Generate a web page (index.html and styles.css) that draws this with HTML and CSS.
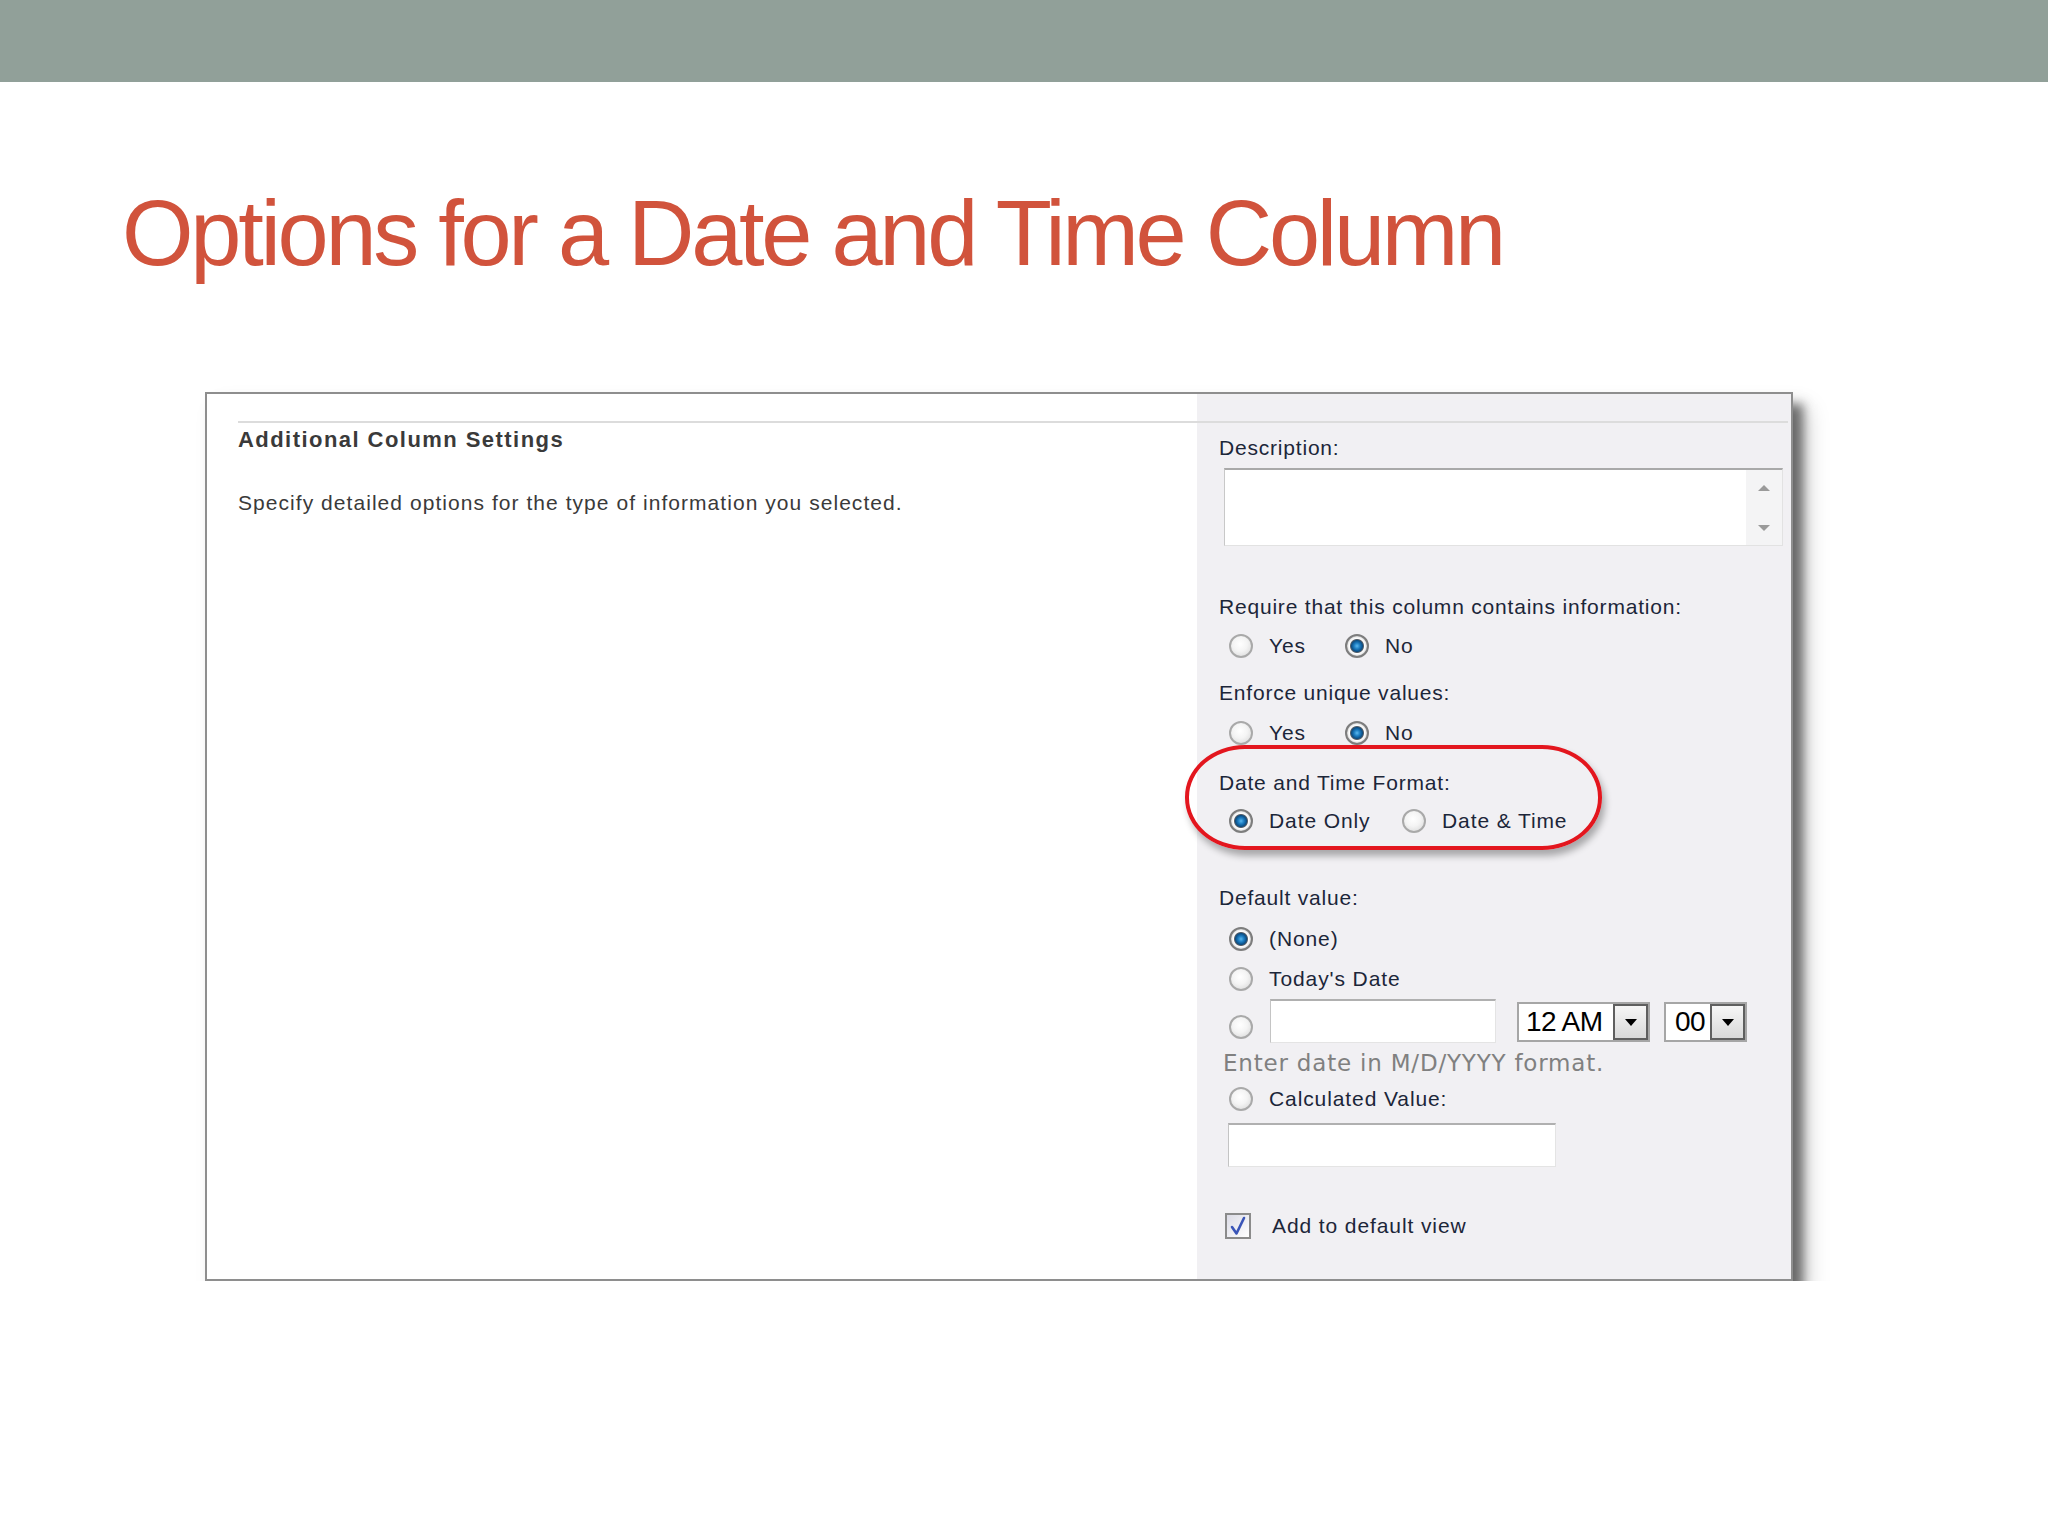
FILE: index.html
```html
<!DOCTYPE html>
<html lang="en">
<head>
<meta charset="utf-8">
<title>Options for a Date and Time Column</title>
<link rel="stylesheet" href="styles.css">
</head>
<body>
<div class="topbar"></div>
<h1 class="title">Options for a Date and Time Column</h1>
<div class="card">
  <div class="left">
    <div class="rule"></div>
    <div class="heading">Additional Column Settings</div>
    <div class="desc">Specify detailed options for the type of information you selected.</div>
  </div>
  <div class="right">
    <div class="rule"></div>
    <div class="content">
      <div class="lbl lbl-desc">Description:</div>
      <div class="textarea">
        <div class="ta-body"></div>
        <div class="ta-scroll"><span class="arr up"></span><span class="arr down"></span></div>
      </div>

      <div class="lbl lbl-req">Require that this column contains information:</div>
      <div class="radios r1">
        <div class="opt w-yes"><span class="radio"></span><span class="otext">Yes</span></div>
        <div class="opt"><span class="radio on"></span><span class="otext">No</span></div>
      </div>

      <div class="lbl lbl-uniq">Enforce unique values:</div>
      <div class="radios r2">
        <div class="opt w-yes"><span class="radio"></span><span class="otext">Yes</span></div>
        <div class="opt"><span class="radio on"></span><span class="otext">No</span></div>
      </div>

      <div class="dtf">
        <div class="lbl">Date and Time Format:</div>
        <div class="radios r3">
          <div class="opt w-date"><span class="radio on"></span><span class="otext">Date Only</span></div>
          <div class="opt"><span class="radio"></span><span class="otext">Date &amp; Time</span></div>
        </div>
      </div>

      <div class="lbl lbl-def">Default value:</div>
      <div class="radios r4">
        <div class="opt"><span class="radio on"></span><span class="otext">(None)</span></div>
      </div>
      <div class="radios r5">
        <div class="opt"><span class="radio"></span><span class="otext">Today's Date</span></div>
      </div>
      <div class="daterow">
        <span class="radio low"></span>
        <div class="input date-in"></div>
        <div class="select sel-hour"><span class="sel-text">12 AM</span><span class="sel-btn"><span class="tri"></span></span></div>
        <div class="select sel-min"><span class="sel-text">00</span><span class="sel-btn"><span class="tri"></span></span></div>
      </div>
      <div class="hint">Enter date in M/D/YYYY format.</div>
      <div class="radios r6">
        <div class="opt"><span class="radio"></span><span class="otext">Calculated Value:</span></div>
      </div>
      <div class="input calc-in"></div>

      <div class="checkrow">
        <span class="checkbox"><svg viewBox="0 0 22 22" width="22" height="22"><path d="M5 12 L9.5 18.5 L17 3" fill="none" stroke="#3a55b8" stroke-width="2.6" stroke-linecap="round" stroke-linejoin="round"/></svg></span>
        <span class="ctext">Add to default view</span>
      </div>
    </div>
  </div>
</div>
</body>
</html>
```

FILE: styles.css
```css
html, body {
  margin: 0;
  padding: 0;
  background: #ffffff;
}

body {
  font-family: "Liberation Sans", Arial, sans-serif;
}

.topbar {
  height: 82px;
  background: #91a099;
}

.title {
  margin: 105px 0 113px 122px;
  font-family: "Liberation Sans", Arial, sans-serif;
  font-weight: normal;
  font-size: 92px;
  line-height: 92px;
  letter-spacing: -3.3px;
  color: #d1533c;
}

.card {
  margin-left: 205px;
  width: 1588px;
  height: 889px;
  box-sizing: border-box;
  border: 2px solid #8e8e8e;
  display: flex;
  background: #ffffff;
  box-shadow: 10px 12px 10px rgba(60, 60, 60, 0.7), 14px 16px 22px rgba(0, 0, 0, 0.18);
}

.left {
  width: 990px;
  flex: none;
  padding-top: 27px;
  padding-left: 31px;
  box-sizing: border-box;
  background: #ffffff;
}

.rule {
  height: 2px;
  background: #dcdcdc;
}

.heading {
  margin-top: 5px;
  font-size: 22px;
  line-height: 24px;
  font-weight: bold;
  letter-spacing: 1.45px;
  color: #3a3a3a;
}

.desc {
  margin-top: 39px;
  font-size: 21px;
  line-height: 24px;
  letter-spacing: 1.05px;
  color: #3a3a3a;
}

.right {
  flex: 1;
  background: #f1f0f3;
  padding-top: 27px;
  padding-right: 3px;
}

.content {
  padding-left: 22px;
}

.lbl {
  font-size: 21px;
  line-height: 24px;
  letter-spacing: 0.8px;
  color: #1c2639;
  white-space: nowrap;
}

.lbl-desc { margin-top: 13px; }
.lbl-req { margin-top: 49px; }
.lbl-uniq { margin-top: 23px; }
.lbl-def { margin-top: 53px; }

.textarea {
  margin-top: 8px;
  margin-left: 5px;
  width: 559px;
  height: 78px;
  box-sizing: border-box;
  display: flex;
  border-top: 2px solid #a9a9a9;
  border-left: 1px solid #c8c8c8;
  border-right: 1px solid #e2e2e2;
  border-bottom: 1px solid #e2e2e2;
  background: #ffffff;
}

.ta-body {
  flex: 1;
  background: #ffffff;
}

.ta-scroll {
  width: 36px;
  background: #f4f4f5;
  display: flex;
  flex-direction: column;
  align-items: center;
  justify-content: space-between;
  padding: 15px 0 14px;
  box-sizing: border-box;
}

.arr {
  width: 0;
  height: 0;
  border-left: 6px solid transparent;
  border-right: 6px solid transparent;
}

.arr.up { border-bottom: 6px solid #9a9a9a; }
.arr.down { border-top: 6px solid #9a9a9a; }

.radios {
  display: flex;
  align-items: center;
  height: 24px;
  margin-left: 10px;
}

.r1 { margin-top: 15px; }
.r2 { margin-top: 16px; }
.r3 { margin-top: 14px; }
.r4 { margin-top: 17px; }
.r5 { margin-top: 16px; }
.r6 { margin-top: 12px; }

.opt {
  display: flex;
  align-items: center;
}

.w-yes { width: 116px; }
.w-date { width: 173px; }

.radio {
  display: block;
  width: 24px;
  height: 24px;
  flex: none;
  box-sizing: border-box;
  border-radius: 50%;
  border: 2px solid #a9a9a9;
  background: radial-gradient(circle at 45% 40%, #ffffff 0%, #f4f4f4 45%, #d4d4d4 100%);
}

.radio.on {
  border-color: #7d7d7d;
  background: radial-gradient(circle, #5bb8ee 0, #1c7cc0 3px, #0c4e84 5.5px, #55606b 6.5px, #ffffff 7.5px, #ececec 9px, #c9c9c9 10px);
}

.otext {
  margin-left: 16px;
  font-size: 21px;
  line-height: 24px;
  letter-spacing: 0.9px;
  color: #1c2639;
  white-space: nowrap;
}

.dtf {
  position: relative;
  margin-top: 26px;
}

.dtf::before {
  content: "";
  position: absolute;
  left: -34px;
  top: -26px;
  width: 417px;
  height: 105px;
  box-sizing: border-box;
  border: 4px solid #e3161e;
  border-radius: 60px / 52px;
  box-shadow: 3px 6px 7px rgba(0, 0, 0, 0.3);
  pointer-events: none;
}

.daterow {
  margin-top: 8px;
  margin-left: 10px;
  height: 46px;
  display: flex;
  align-items: flex-start;
}

.radio.low {
  margin-top: 16px;
}

.input {
  box-sizing: border-box;
  height: 44px;
  background: #ffffff;
  border-top: 2px solid #b0b0b0;
  border-left: 1px solid #c4c4c4;
  border-right: 1px solid #e4e4e4;
  border-bottom: 1px solid #e4e4e4;
}

.date-in {
  margin-left: 17px;
  width: 226px;
}

.select {
  margin-top: 3px;
  height: 40px;
  box-sizing: border-box;
  border: 2px solid #a6a6a6;
  background: #ffffff;
  display: flex;
  align-items: stretch;
  justify-content: space-between;
}

.sel-hour {
  margin-left: 21px;
  width: 133px;
}

.sel-min {
  margin-left: 14px;
  width: 83px;
}

.sel-text {
  font-size: 28px;
  line-height: 36px;
  letter-spacing: -0.6px;
  color: #000000;
  padding-left: 7px;
}

.sel-min .sel-text {
  padding-left: 9px;
}

.sel-btn {
  width: 35px;
  box-sizing: border-box;
  border: 2px solid #5f5f5f;
  background: linear-gradient(#f6f6f6, #d9d9d9);
  display: flex;
  align-items: center;
  justify-content: center;
}

.tri {
  width: 0;
  height: 0;
  border-left: 6px solid transparent;
  border-right: 6px solid transparent;
  border-top: 7px solid #000000;
}

.hint {
  margin-top: 6px;
  margin-left: 4px;
  font-family: "DejaVu Sans", Verdana, sans-serif;
  font-size: 23px;
  line-height: 24px;
  letter-spacing: 0.8px;
  color: #808080;
  white-space: nowrap;
}

.calc-in {
  margin-top: 12px;
  margin-left: 9px;
  width: 328px;
}

.checkrow {
  margin-top: 46px;
  margin-left: 6px;
  height: 26px;
  display: flex;
  align-items: center;
}

.checkbox {
  width: 26px;
  height: 26px;
  box-sizing: border-box;
  border: 2px solid #8b8b8b;
  background: linear-gradient(135deg, #dcdce6, #ffffff);
  display: flex;
  align-items: center;
  justify-content: center;
}

.ctext {
  margin-left: 21px;
  font-size: 21px;
  line-height: 24px;
  letter-spacing: 0.9px;
  color: #1c2639;
  white-space: nowrap;
}
```
